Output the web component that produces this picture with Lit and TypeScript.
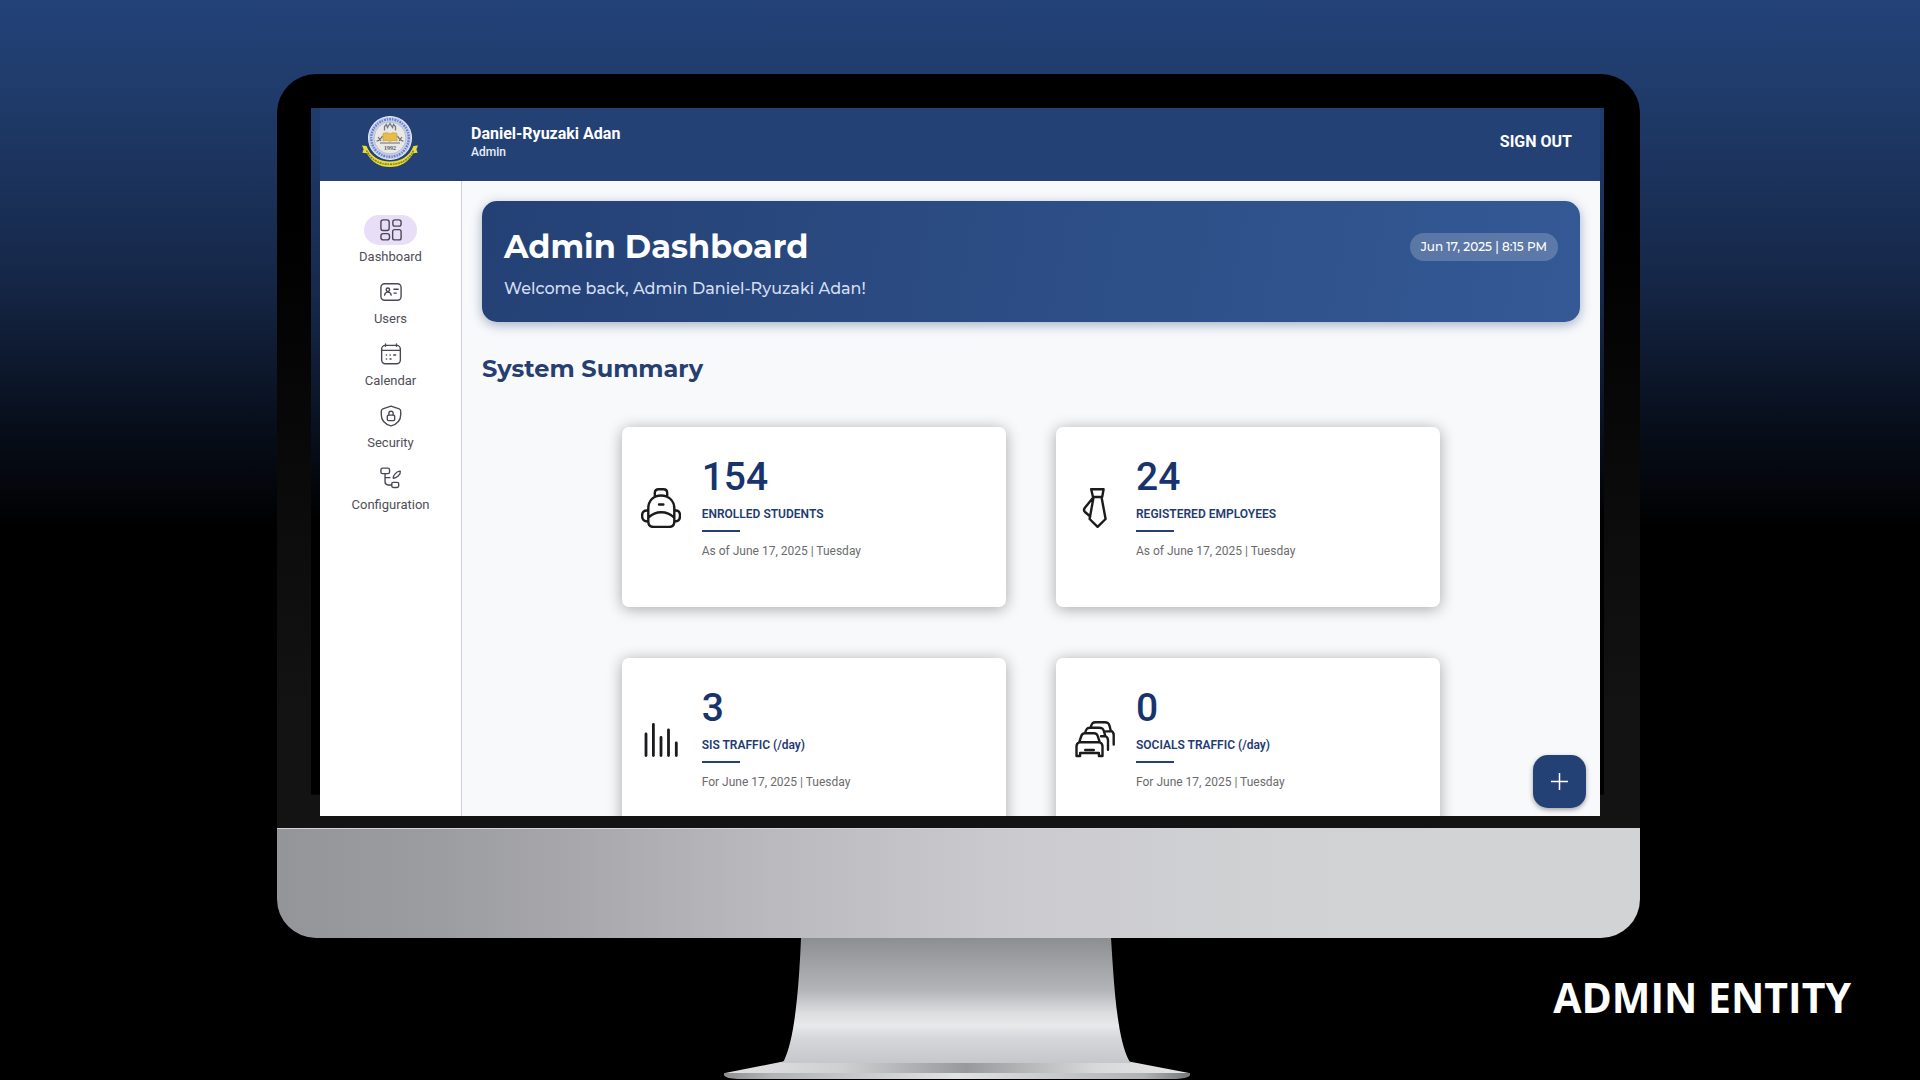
import { LitElement, html, css, svg } from "lit";
import { customElement, property } from "lit/decorators.js";
import { classMap } from "lit/directives/class-map.js";

const navIcons: Record<string, unknown> = {
  dashboard: svg`<rect x="1" y="1" width="9" height="11.5" rx="2.4"/><rect x="14" y="1" width="9" height="6.8" rx="2.4"/><rect x="1" y="16" width="9.4" height="6.8" rx="2.6"/><rect x="13.8" y="11.6" width="9.2" height="11.2" rx="2.2"/>`,
  users: svg`<rect x="1" y="3" width="22" height="18" rx="4"/><circle cx="8.6" cy="9.6" r="1.9"/><path d="M5 15.4c.3-2 1.6-3.2 3.6-3.2s3.300 1.200 3.600 3.200M15.200 9h4.600M15.200 13.200h2.600"/>`,
  calendar: svg`<rect x="1.800" y="2.600" width="20.400" height="20" rx="4"/><path d="M2 8h20M6 1v2.500M18 1v2.500"/><path d="M7 13h.1M11 13h.1M15 13h2M7 17.400h.1M11 17.400h1" stroke-width="1.700"/>`,
  security: svg`<path d="M12 1.200 3 4.200C1.500 4.700 1.400 5.500 1.400 7v3.500c0 6 4.200 10.300 10.600 12.300 6.400-2 10.600-6.300 10.600-12.300V7c0-1.500-.1-2.300-1.600-2.800z"/><rect x="8" y="11" width="8" height="6" rx="1.200"/><path d="M9.700 11V9c0-3 4.600-3 4.600 0v2"/>`,
  configuration: svg`<rect x="1" y="1.200" width="9.400" height="6" rx="1.800"/><rect x="12.800" y="16.800" width="7.600" height="5.600" rx="1.600"/><path d="M5.500 7.200v9c0 2.400 1 3.400 3.400 3.400h3.900M5.500 11.600h5.300M14.400 12.200c-.4-2 .4-3 2.300-5 1.700-1.800 3.600-2.900 5.400-2.600.5 2-.4 3.500-2.300 5.200-2 1.800-3.200 2.600-5.400 2.400z"/>`,
};

const statIcons: Record<string, unknown> = {
  backpack: svg`<path d="M13.800 8.500V5c0-2.600 1.300-3.800 3.800-3.800h4.800c2.500 0 3.800 1.200 3.800 3.800v3.500M7.300 33.500V20.500C7.300 12.500 12.500 7.500 20 7.500s13.300 5 13.300 13v13c0 3.800-2 5.500-5.600 5.500H12.900c-3.600 0-5.600-1.700-5.600-5.500zM18 16.500h4.400M7.600 29.500C11 26 15.500 24.200 20.300 24.200S29.600 26 33 29.500M7 22.600c-4.200-.4-5.900 1.400-5.900 5.200s1.800 5.900 6.200 5.700M33.500 22.600c4.200-.4 5.500 1.400 5.500 5.200s-1.600 5.900-5.700 5.700"/>`,
  tie: svg`<path d="M16.200 1.200h12.400L27.200 9H18zM18.500 9.500 14.600 31l8 7.800 8-7.800-4-21.500M18 9.800 9.700 20c-1 1.400-.9 2.900.3 4l5.200 4.500"/>`,
  bars: svg`<path stroke-width="2.800" d="M5 15v21.500M12.400 5.500v31M20 18.500v18M27.500 11v25.500M35.300 24v12.500"/>`,
  cars: svg`<path d="M1.500 37V27.500c0-2 .9-3.600 2.700-4.200h20.600c1.800.6 2.700 2.200 2.700 4.200V37h-3.600v-3H5.100v3zM4.200 23.300 6.300 17c.6-1.900 1.600-2.700 3.500-2.700h9.400c1.900 0 2.900.8 3.500 2.700l2.100 6.300M10.200 31h8.600M10 14c1.400-4.300 2.300-5.200 5-5.200h9c3.400 0 4.200.8 5 3.500l1.300 4.700c1.700.8 2.700 2.300 2.700 4.300v9.500M26 17.200h4.300M15.500 8.500C17 4.300 17.700 3.200 20.500 3.200h9c3.400 0 4.300.8 5 3.500l1.300 5c1.700.8 2.900 2.300 2.900 4.300v9.500M31 12.400h4.800"/>`,
};

@customElement("school-seal")
class SchoolSeal extends LitElement {
  static styles = css`
    :host { display: block; }
    .seal { display: block; width: 58px; height: 54px; }
    .year { font: 700 6px "Liberation Serif", serif; fill: #555a6b; }
  `;
  render() {
    return html`<svg class="seal" viewBox="0 0 58 54" role="img" aria-label="School seal">
      <circle cx="29" cy="23" r="22" fill="#f4f6fa"/>
      <circle cx="29" cy="23" r="18.800" fill="none" stroke="#c3cdec" stroke-width="5"/>
      <circle cx="29" cy="23" r="18.800" fill="none" stroke="#6a80c4" stroke-width="2.400" stroke-dasharray="1.300 1.200 1.800 1"/>
      <circle cx="29" cy="23" r="16" fill="#e9e8e3" stroke="#8d9ac4" stroke-width=".6"/>
      <path d="M23.500 15.500v-4l2-2 1 3 2.500-4 2.500 4 1-3 2 2v4" fill="none" stroke="#737986" stroke-width="1.300"/>
      <path d="M15.500 26c3 0 4-2 6-5M42.500 26c-3 0-4-2-6-5M17 22l3 4M41 22l-3 4M19 28h20" fill="none" stroke="#6b6f73" stroke-width="1.200"/>
      <path d="M22 18.500c3-1 5-1 7 .4 2-1.400 4-1.400 7-.4v7.500c-3-.8-5-.8-7 .4-2-1.200-4-1.200-7-.4z" fill="#e9bd45" stroke="#b6934a" stroke-width=".6"/>
      <text class="year" x="29" y="35" text-anchor="middle">1992</text>
      <path d="M1 30.500 5.500 31c4 10 12 15.500 23.500 15.500S48.500 41 52.500 31l4.500-.5-1.600 3.700 1.200 3.600-4.300.4C47.500 47 39.500 52 29 52S10.500 47 5.700 38.200l-4.300-.4 1.200-3.600z" fill="#e8dc35"/>
      <path d="M5.500 35.500C10 44.800 18 49.300 29 49.300S48 44.800 52.500 35.500" fill="none" stroke="#85802e" stroke-width="1.700" stroke-dasharray="1.500 .8 2.200 .8"/>
    </svg>`;
  }
}

@customElement("stat-card")
class StatCard extends LitElement {
  @property() icon = "";
  @property() value = "";
  @property() label = "";
  @property() note = "";
  static styles = css`
    :host { display: block; }
    .card {
      display: flex; align-items: center; gap: 21px; box-sizing: border-box;
      padding: 24px 19px 42px; border-radius: 7px; background: #fff;
      box-shadow: 0 2px 15px rgba(0, 0, 0, 0.33);
      font-family: Roboto, "Liberation Sans", sans-serif;
    }
    .icon { flex: none; width: 40px; height: 40px; fill: none; stroke: #1b1b1d; stroke-width: 2.4; stroke-linecap: round; stroke-linejoin: round; }
    .value { margin: 0; font-size: 39px; line-height: 53px; font-weight: 500; color: #17356c; }
    .label { margin: 0; font-size: 12px; line-height: 20px; font-weight: 600; color: #1f3b73; }
    .rule { width: 38px; height: 2px; margin: 6px 0 9px; background: #263f78; }
    .note { margin: 0 0 4px; font-size: 12px; line-height: 20px; color: #6b6b6e; }
  `;
  render() {
    return html`<article class="card">
      <svg class="icon" viewBox="0 0 40 40" aria-hidden="true">${statIcons[this.icon]}</svg>
      <div>
        <p class="value">${this.value}</p>
        <h3 class="label">${this.label}</h3>
        <div class="rule"></div>
        <p class="note">${this.note}</p>
      </div>
    </article>`;
  }
}

@customElement("app-root")
class AppRoot extends LitElement {
  private nav = ["Dashboard", "Users", "Calendar", "Security", "Configuration"];
  private stats = [
    { icon: "backpack", value: "154", label: "ENROLLED STUDENTS", note: "As of June 17, 2025 | Tuesday" },
    { icon: "tie", value: "24", label: "REGISTERED EMPLOYEES", note: "As of June 17, 2025 | Tuesday" },
    { icon: "bars", value: "3", label: "SIS TRAFFIC (/day)", note: "For June 17, 2025 | Tuesday" },
    { icon: "cars", value: "0", label: "SOCIALS TRAFFIC (/day)", note: "For June 17, 2025 | Tuesday" },
  ];

  static styles = css`
    :host { display: block; font-family: Roboto, "Liberation Sans", sans-serif; }
    .stage {
      display: grid; grid-template-columns: 277fr 1363fr 280fr; align-items: start;
      box-sizing: border-box; min-height: 100vh; padding-top: 74px; overflow: hidden;
      background: linear-gradient(#234278 0, #203c6c 8%, #16284a 25%, #080f1c 39%, #000 49%);
    }
    .monitor { grid-column: 2; grid-row: 1; }
    .bezel { padding: 34px 36px 12px 34px; border-radius: 39px 39px 0 0; background: linear-gradient(#000 20%, #131313 85%); }
    .glass {
      padding: 0 4px 0 9px;
      background: linear-gradient(#1f3c6e, #16284a 28%, #080f1c 48%, #000 60%) no-repeat top / 100% 97%;
    }
    .screen {
      position: relative; display: grid; grid-template: auto minmax(0, 1fr) / 142px minmax(0, 1fr);
      aspect-ratio: 1280 / 708; overflow: hidden; background: #f8f9fb;
    }
    .chin {
      height: 109px; border-top: 1px solid #d4d4d8; border-radius: 0 0 39px 39px;
      background: linear-gradient(90deg, #949598, #9c9da0 12%, #a8a8ac 22%, #bbbbbf 37%, #cbcbcf 54%, #d1d2d4 75%, #d2d3d5);
    }
    .stand { display: block; width: 35%; margin-left: 32%; }

    .topbar {
      grid-column: 1 / -1; display: flex; align-items: center; padding: 7px 28px 12px 41px;
      background: #244175; color: #fff;
    }
    .person { flex: 1; margin-left: 52px; }
    .name { margin: 0; font-size: 16px; line-height: 20px; font-weight: 700; }
    .role { margin: 0; font-size: 12px; line-height: 16px; font-weight: 500; color: #e8eefa; }
    .signout { padding: 0; border: 0; background: none; color: #fff; font: 700 16px/20px Roboto, "Liberation Sans", sans-serif; cursor: pointer; }

    .sidebar { padding-top: 34px; background: #fff; border-right: 1px solid #cfcfe0; }
    .menu { display: grid; gap: 12px; margin: 0; padding: 0; list-style: none; }
    .item { display: flex; flex-direction: column; align-items: center; gap: 4px; font-size: 13px; line-height: 16px; color: #4f4e55; text-decoration: none; }
    .chip { display: grid; place-items: center; width: 53px; height: 30px; border-radius: 15px; }
    .chip.active { background: #e8def8; }
    .glyph { width: 22px; height: 22px; fill: none; stroke: #4a4754; stroke-width: 1.5; stroke-linecap: round; stroke-linejoin: round; }

    .content { padding: 20px; overflow: hidden; }
    .banner {
      padding: 24px 22px 21px; border-radius: 15px; color: #fff;
      background: linear-gradient(100deg, #244175, #345995);
      box-shadow: 0 3px 12px rgba(36, 65, 117, 0.4);
      font-family: Montserrat, Inter, sans-serif;
    }
    .headline { display: flex; align-items: center; justify-content: space-between; margin-bottom: 8px; }
    .title { margin: 0; font-size: 32px; line-height: 44px; font-weight: 700; }
    .stamp { padding: 0 11px; border-radius: 14px; background: rgba(255, 255, 255, 0.2); font-size: 12px; line-height: 28px; font-weight: 500; }
    .welcome { margin: 0; font-size: 16px; line-height: 24px; font-weight: 500; color: #d3def2; }
    .section { margin: 32px 0 43px; font: 700 24px/30px Montserrat, Inter, sans-serif; color: #263f70; }
    .cards { display: grid; grid-template-columns: 35% 35%; gap: 51px 50px; justify-content: center; }
    .fab {
      position: absolute; right: 14px; bottom: 8px; display: grid; place-items: center;
      width: 53px; height: 53px; padding: 0; border: 0; border-radius: 15px; background: #244175;
      box-shadow: 0 2px 5px rgba(0, 0, 0, 0.35); cursor: pointer;
    }
    .plus { width: 17px; height: 17px; stroke: #fff; stroke-width: 1.6; }
    .caption {
      grid-column: 1 / -1; grid-row: 1; place-self: end; margin: 0; padding: 0 69px 54px 0;
      font: 700 41px/58px "Open Sans", sans-serif; color: #fff;
    }
  `;

  render() {
    return html`<main class="stage">
      <div class="monitor">
        <div class="bezel"><div class="glass"><div class="screen">
          <header class="topbar">
            <school-seal></school-seal>
            <div class="person"><p class="name">Daniel-Ryuzaki Adan</p><p class="role">Admin</p></div>
            <button class="signout" type="button">SIGN OUT</button>
          </header>
          <nav class="sidebar"><ul class="menu">
            ${this.nav.map((n, i) => html`<li><a class="item" href="#${n.toLowerCase()}">
              <span class=${classMap({ chip: true, active: i === 0 })}>
                <svg class="glyph" viewBox="0 0 24 24" aria-hidden="true">${navIcons[n.toLowerCase()]}</svg>
              </span>${n}</a></li>`)}
          </ul></nav>
          <section class="content">
            <div class="banner">
              <div class="headline">
                <h1 class="title">Admin Dashboard</h1>
                <time class="stamp" datetime="2025-06-17T20:15">Jun 17, 2025 | 8:15 PM</time>
              </div>
              <p class="welcome">Welcome back, Admin Daniel-Ryuzaki Adan!</p>
            </div>
            <h2 class="section">System Summary</h2>
            <div class="cards">
              ${this.stats.map((s) => html`<stat-card icon=${s.icon} value=${s.value} label=${s.label} note=${s.note}></stat-card>`)}
            </div>
          </section>
          <button class="fab" type="button" aria-label="Add">
            <svg class="plus" viewBox="0 0 18 18" aria-hidden="true"><path d="M9 0v18M0 9h18"/></svg>
          </button>
        </div></div></div>
        <div class="chin"></div>
        <svg class="stand" viewBox="0 0 477 142" aria-hidden="true">
          <defs>
            <linearGradient id="neck" x1="0" y1="0" x2="0" y2="1">
              <stop offset="0" stop-color="#8d8e91"/><stop offset=".18" stop-color="#9e9fa2"/>
              <stop offset=".42" stop-color="#b4b5b9"/><stop offset=".6" stop-color="#dcdddf"/>
              <stop offset=".7" stop-color="#e8e9ea"/><stop offset=".8" stop-color="#d6d7da"/>
              <stop offset="1" stop-color="#c6c7ca"/>
            </linearGradient>
            <linearGradient id="foot" x1="0" y1="0" x2="1" y2="0">
              <stop offset="0" stop-color="#e2e2e3"/><stop offset=".25" stop-color="#cfd0d2"/>
              <stop offset=".52" stop-color="#98999c"/><stop offset=".8" stop-color="#d8d9da"/>
              <stop offset="1" stop-color="#e6e6e7"/>
            </linearGradient>
            <linearGradient id="edge" x1="0" y1="0" x2="1" y2="0">
              <stop offset="0" stop-color="#8f9092"/><stop offset=".1" stop-color="#b2b3b5"/>
              <stop offset=".5" stop-color="#e1e2e3"/><stop offset=".9" stop-color="#b2b3b5"/>
              <stop offset="1" stop-color="#77787a"/>
            </linearGradient>
          </defs>
          <path d="M70 123.500h346l60 11.500H12z" fill="url(#foot)"/>
          <path d="M88 0H398C401 48 404 100 416 122.500q1 2 3 2.500H67q3-.5 4-2.500C82 100 86 48 88 0z" fill="url(#neck)"/>
          <path d="M11 135h466v2.500q-2 3-14 3.500H25q-12-.5-14-3.500z" fill="url(#edge)"/>
        </svg>
      </div>
      <p class="caption">ADMIN ENTITY</p>
    </main>`;
  }
}
